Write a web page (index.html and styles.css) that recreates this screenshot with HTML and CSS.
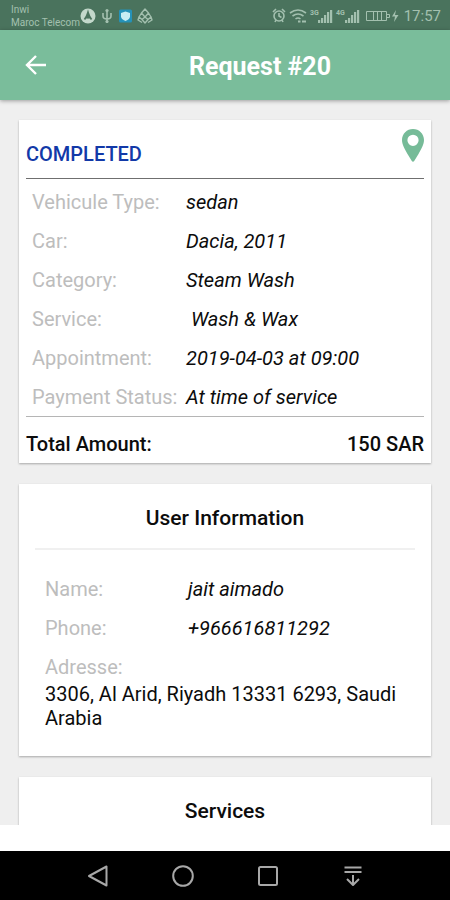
FILE: index.html
```html
<!DOCTYPE html>
<html lang="en">
<head>
<meta charset="utf-8">
<meta name="viewport" content="width=device-width, initial-scale=1">
<title>Request #20</title>
<link rel="stylesheet" href="styles.css">
</head>
<body>
<div class="status-bar">
  <div class="carriers"><span>Inwi</span><span>Maroc Telecom</span></div>
  <svg class="notices" width="74" height="18" viewBox="0 0 74 18" aria-hidden="true">
    <circle cx="8" cy="9" r="7.500" fill="#c3d8cb"/>
    <path d="M4.500 12.500Q7 9 8 5.500q1 3.500 3.500 7M6.500 11.500 8 9.500l1.500 2" fill="none" stroke="#4a735d" stroke-width="1.800"/>
    <g fill="none" stroke="#a3c0af" stroke-width="1.600"><path d="M27 3v13M23 6v3q0 3 4 3t4-3V6"/></g>
    <circle cx="27" cy="3.500" r="1.600" fill="#a3c0af"/><circle cx="27" cy="14.500" r="1.600" fill="#a3c0af"/>
    <rect x="39" y="2.500" width="13" height="13" rx="1.500" fill="#2592b8"/>
    <path d="M45.500 4.500 50 6v3.500q0 2.500-4.500 4.500Q41 12 41 9.500V6z" fill="#c9edf3"/>
    <g fill="none" stroke="#a3c0af" stroke-width="1.400" stroke-linejoin="round"><path d="M65 2 68.500 6 65 10l-3.500-4zM61.500 6 59 10l3 2.500L65 10l3 2.500 3-2.500-2.500-4M62 12.500 65 16l3-3.500M59 10l-1 3 4 2.500M71 10l1 3-4 2.500"/></g>
  </svg>
  <svg class="signals" width="130" height="18" viewBox="0 0 130 18" aria-hidden="true">
    <g fill="none" stroke="#a3c0af" stroke-width="1.600">
      <circle cx="7" cy="9" r="5"/><path d="M7 6v3l2.500 1.500M1 5l3-3M10 2l3 3M3 15l1-2M11 15l-1-2"/>
      <path d="M18 6q8-6 16 0M20.500 9q5.500-4 11 0M23.500 12q2.500-2 5 0"/>
      <path d="M26 14.500h2.500M30 14.500h4" stroke-width="2.200"/>
      <path d="M94.500 4.500h20v9h-20zM115 7.500h2.500v3H115M101.500 4.500v9M105.500 4.500v9M109.500 4.500v9" stroke-width="1"/>
    </g>
    <g fill="#a3c0af">
      <path d="M46 13h2.200v3H46zM49 11h2.200v5H49zM52 8h2.200v8H52zM55 5h2.200v11H55zM58 3h2.200v13H58zM73 13h2.200v3H73zM76 11h2.200v5H76zM79 8h2.200v8H79zM82 5h2.200v11H82zM85 3h2.200v13H85z"/>
      <path d="M124 3l-4 6.500h3L122 15l4.500-7H123z"/>
      <text x="38" y="8" class="band">3G</text><text x="64" y="8" class="band">4G</text>
    </g>
  </svg>
  <time class="clock">17:57</time>
</div>

<header class="app-bar">
  <button class="back" type="button" aria-label="Back">
    <svg width="22" height="20" viewBox="0 0 22 20"><path d="M21 10H2.500M11 1 2 10l9 9" fill="none" stroke="#fff" stroke-width="2.400"/></svg>
  </button>
  <h1>Request #20</h1>
</header>

<main class="content">
  <section class="card summary">
    <div class="summary-head">
      <strong class="state">COMPLETED</strong>
      <button class="pin" type="button" aria-label="Show on map">
        <svg width="22" height="33" viewBox="0 0 22 33"><path fill="#76bb98" fill-rule="evenodd" d="M11 0C4.900 0 0 4.900 0 11c0 5 3 9 5.500 14l4.300 7c.6 1 1.800 1 2.400 0l4.300-7C19 20 22 16 22 11 22 4.900 17.100 0 11 0zm0 5.700a5.600 5.600 0 1 1 0 11.200 5.600 5.600 0 0 1 0-11.200z"/></svg>
      </button>
    </div>
    <dl class="fields">
      <div><dt>Vehicule Type:</dt><dd>sedan</dd></div>
      <div><dt>Car:</dt><dd>Dacia, 2011</dd></div>
      <div><dt>Category:</dt><dd>Steam Wash</dd></div>
      <div><dt>Service:</dt><dd>&nbsp;Wash &amp; Wax</dd></div>
      <div><dt>Appointment:</dt><dd>2019-04-03 at 09:00</dd></div>
      <div><dt>Payment Status:</dt><dd>At time of service</dd></div>
    </dl>
    <div class="total"><span>Total Amount:</span><span>150 SAR</span></div>
  </section>

  <section class="card user">
    <h2>User Information</h2>
    <dl class="fields">
      <div><dt>Name:</dt><dd>jait aimado</dd></div>
      <div><dt>Phone:</dt><dd>+966616811292</dd></div>
      <div class="address"><dt>Adresse:</dt><dd>3306, Al Arid, Riyadh 13331 6293, Saudi Arabia</dd></div>
    </dl>
  </section>

  <section class="card services">
    <h2>Services</h2>
  </section>
</main>

<nav class="system-nav">
  <button type="button" aria-label="Back"><svg width="22" height="22" viewBox="0 0 22 22"><path d="M19.500 1.500v19L2 11z"/></svg></button>
  <button type="button" aria-label="Home"><svg width="22" height="22" viewBox="0 0 22 22"><circle cx="11" cy="11" r="9.800"/></svg></button>
  <button type="button" aria-label="Recent apps"><svg width="22" height="22" viewBox="0 0 22 22"><rect x="2" y="2" width="18" height="18" rx="1.500"/></svg></button>
  <button type="button" aria-label="Notifications"><svg width="22" height="22" viewBox="0 0 22 22"><path d="M2.500 2.500h17M2.500 7h17M11 10v9.500M5 14l6 6 6-6"/></svg></button>
</nav>
</body>
</html>
```
FILE: styles.css
```css
* { box-sizing: border-box; }

body {
  margin: 0;
  height: 100vh;
  display: flex;
  flex-direction: column;
  overflow: hidden;
  background: #fff;
  color: #0c0c0c;
  font: 20px/24px Roboto, "Liberation Sans", sans-serif;
}

button {
  display: flex;
  padding: 0;
  border: 0;
  background: none;
}

h1, h2, dl, dd { margin: 0; }

.status-bar {
  flex: none;
  height: 30px;
  padding: 2px 9px 0 11px;
  display: flex;
  align-items: center;
  background: #4a735d;
  color: #a3c0af;
}

.carriers {
  display: flex;
  flex-direction: column;
  font-size: 10px;
  line-height: 13px;
}

.signals { margin-left: auto; }

.band { font-size: 7px; font-weight: 700; }

.clock {
  margin-left: 2px;
  font-size: 15px;
}

.app-bar {
  flex: none;
  height: 70px;
  padding-left: 25px;
  display: flex;
  align-items: center;
  background: #7abd9b;
  box-shadow: 0 1px 4px rgba(0, 0, 0, .35);
  z-index: 1;
}

.app-bar h1 {
  flex: 1;
  margin-left: 23px;
  padding-top: 3px;
  color: #fff;
  font-size: 25px;
  line-height: 32px;
  font-weight: 700;
  text-align: center;
}

.content {
  flex: 1;
  min-height: 0;
  margin-bottom: 26px;
  padding: 20px 19px 0;
  display: flex;
  flex-direction: column;
  gap: 21px;
  overflow: hidden;
  background: #efefef;
}

.card {
  flex: none;
  background: #fff;
  box-shadow: 0 1px 2px rgba(0, 0, 0, .3);
}

.summary { padding: 0 7px; }

.summary-head {
  height: 59px;
  padding-top: 9px;
  display: flex;
  justify-content: space-between;
  align-items: flex-start;
  border-bottom: 1px solid #6f6f6f;
}

.state {
  margin-top: 13px;
  color: #1239a8;
  font-weight: 500;
}

.fields {
  display: flex;
  flex-direction: column;
  gap: 15px;
}

.fields > div { display: flex; }

.fields dt {
  flex: none;
  width: 154px;
  color: #bdbdbd;
  white-space: nowrap;
}

.fields dd { font-style: italic; }

.summary .fields { padding: 11px 6px 7px; }

.total {
  padding: 15px 0 7px;
  display: flex;
  justify-content: space-between;
  border-top: 1px solid #b5b5b5;
  font-weight: 500;
}

.user { padding: 0 16px 26px; }

.card h2 {
  padding: 22px 0 18px;
  font-size: 21px;
  font-weight: 500;
  text-align: center;
}

.user h2 { border-bottom: 2px solid #f0f0f0; }

.user .fields { padding: 27px 9px 0 10px; }

.user .fields dt { width: 143px; }

.user .fields .address {
  flex-direction: column;
  gap: 3px;
}

.user .address dd { font-style: normal; }

.services { height: 272px; }

.system-nav {
  flex: none;
  height: 49px;
  padding: 0 55px;
  display: flex;
  justify-content: space-around;
  align-items: center;
  background: #000;
}

.system-nav svg {
  fill: none;
  stroke: #a8a8a8;
  stroke-width: 2;
  stroke-linejoin: round;
}
```
